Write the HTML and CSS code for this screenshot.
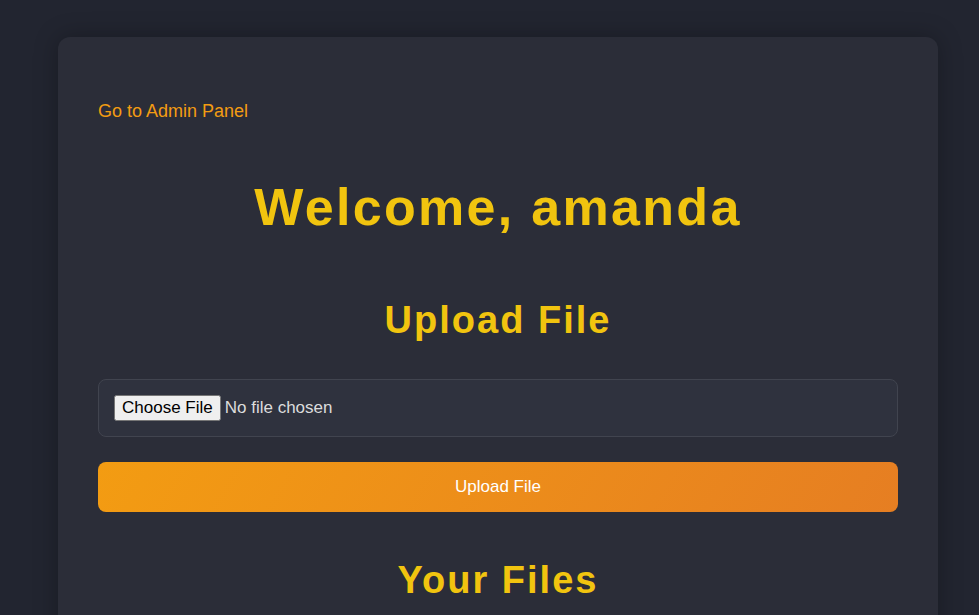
FILE: index.html
```html
<!DOCTYPE html>
<html lang="en">
<head>
<meta charset="utf-8">
<title>Dashboard</title>
<link rel="stylesheet" href="styles.css">
</head>
<body>
<main class="card">
  <nav class="nav"><a class="admin-link" href="#">Go to Admin Panel</a></nav>
  <h1 class="welcome">Welcome, amanda</h1>
  <h2 class="section-title">Upload File</h2>
  <form class="upload-form">
    <input class="file-input" type="file">
    <button class="upload-btn" type="button">Upload File</button>
  </form>
  <h2 class="section-title files-title">Your Files</h2>
</main>
</body>
</html>
```
FILE: styles.css
```css
html, body {
  margin: 0;
  height: 100%;
}
body {
  background: #222530;
  font-family: "Liberation Sans", Arial, sans-serif;
  color: #e0e0e0;
  overflow: hidden;
}
.card {
  box-sizing: border-box;
  width: 880px;
  margin: 37px 0 0 58px;
  padding: 40px;
  min-height: 700px;
  background: #2b2d38;
  border-radius: 12px;
  box-shadow: 0 0 24px rgba(0, 0, 0, 0.28);
  display: flex;
  flex-direction: column;
}
.nav {
  margin-top: 24px;
}
.admin-link {
  color: #f39c12;
  text-decoration: none;
  font-size: 18px;
}
.welcome {
  margin: 56px 0 0;
  text-align: center;
  color: #f1c40f;
  font-size: 52px;
  font-weight: bold;
  letter-spacing: 2.3px;
  line-height: 1.15;
}
.section-title {
  margin: 61px 0 0;
  text-align: center;
  color: #f1c40f;
  font-size: 38px;
  font-weight: bold;
  letter-spacing: 2px;
  line-height: 1.15;
}
.upload-form {
  margin-top: 37px;
  display: flex;
  flex-direction: column;
  gap: 25px;
}
.file-input {
  box-sizing: border-box;
  width: 100%;
  height: 58px;
  padding: 15px;
  background: #2f323e;
  border: 1px solid #41444f;
  border-radius: 8px;
  color: #dcdcdc;
  font-family: "Liberation Sans", Arial, sans-serif;
  font-size: 17px;
}
.file-input::file-selector-button {
  font-family: "Liberation Sans", Arial, sans-serif;
  font-size: 17px;
  height: 26px;
  margin-right: 4px;
}
.upload-btn {
  height: 50px;
  border: none;
  border-radius: 8px;
  background: linear-gradient(120deg, #f39c12 0%, #e67e22 100%);
  color: #ffffff;
  font-family: "Liberation Sans", Arial, sans-serif;
  font-size: 17px;
  cursor: pointer;
}
.files-title {
  margin-top: 47px;
}
```
